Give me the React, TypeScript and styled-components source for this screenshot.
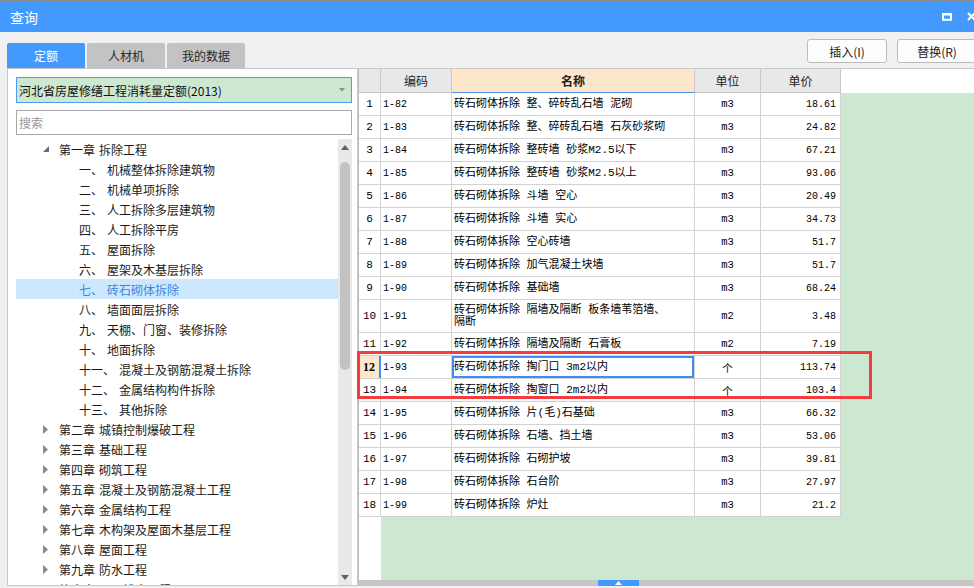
import React from 'react';
import styled, { createGlobalStyle } from 'styled-components';

const GlobalStyle = createGlobalStyle`
  html, body { margin: 0; padding: 0; overflow: hidden; background: #f0f0f0; }
  body { font-family: "Noto Sans CJK SC", "Noto Sans", sans-serif; }
  #root { width: 974px; height: 588px; overflow: hidden; }
  * { box-sizing: border-box; }
`;

const Win = styled.div`
  width: 980px;
  height: 588px;
  display: flex;
  flex-direction: column;
  background: #f0f0f0;
`;

const TitleBar = styled.div`
  height: 32px;
  border-top: 1px solid #8e8e8e;
  background: #4499ff;
  display: flex;
  align-items: center;
  padding: 0 4px 0 10px;
  color: #fff;
  font-size: 14px;
`;

const Title = styled.span`
  flex: 1;
  line-height: 1;
`;

const WinControls = styled.div`
  display: flex;
  align-items: center;
  gap: 15px;
`;

const Toolbar = styled.div`
  height: 36px;
  display: flex;
  align-items: flex-end;
  padding: 0 3px 0 7px;
`;

const Tabs = styled.div`
  display: flex;
  gap: 2px;
  flex: 1;
`;

const Tab = styled.div<{ $active?: boolean }>`
  width: 78px;
  height: 25px;
  display: flex;
  align-items: center;
  justify-content: center;
  font-size: 12px;
  border-radius: 2px 2px 0 0;
  background: ${(p) => (p.$active ? '#4499ff' : '#c3c3c3')};
  color: ${(p) => (p.$active ? '#fff' : '#2a2a2a')};
`;

const Buttons = styled.div`
  align-self: flex-start;
  margin-top: 7px;
  display: flex;
  gap: 10px;
`;

const Button = styled.div`
  width: 80px;
  height: 24px;
  border: 1px solid #bcbcbc;
  border-radius: 3px;
  background: #fdfdfd;
  display: flex;
  align-items: center;
  justify-content: center;
  font-size: 12px;
  color: #222;
`;

const Content = styled.div`
  height: 518px;
  display: flex;
  padding-left: 7px;
`;

const LeftPanel = styled.div`
  width: 351px;
  height: 518px;
  background: #fff;
  border: 1px solid #c9c9c9;
  padding: 8px 5px 0 8px;
  display: flex;
  flex-direction: column;
`;

const Select = styled.div`
  height: 26px;
  border: 1px solid #4f9bf0;
  background: #cde8d0;
  display: flex;
  align-items: center;
  padding: 0 6px 0 2px;
  font-size: 12px;
  color: #111;
`;

const SelectText = styled.span`
  flex: 1;
`;

const Search = styled.input`
  margin-top: 7px;
  height: 25px;
  border: 1px solid #a9a9a9;
  outline: none;
  padding: 0 2px;
  font-family: "Noto Sans CJK SC", sans-serif;
  font-size: 12px;
  color: #222;
  &::placeholder { color: #9a9a9a; }
`;

const TreeArea = styled.div`
  margin-top: 4px;
  flex: 1;
  display: flex;
  min-height: 0;
`;

const TreeList = styled.div`
  flex: 1;
  overflow: hidden;
`;

const TreeRow = styled.div<{ $indent: number; $selected?: boolean }>`
  height: 20px;
  display: flex;
  align-items: center;
  padding-left: ${(p) => p.$indent}px;
  font-size: 12px;
  white-space: nowrap;
  background: ${(p) => (p.$selected ? '#cce8ff' : 'transparent')};
  color: ${(p) => (p.$selected ? '#3a86e0' : '#1a1a1a')};
`;

const Toggle = styled.span`
  width: 16px;
  display: flex;
  align-items: center;
`;

const Prefix = styled.span`
  margin-right: 4px;
`;

const VScroll = styled.div`
  width: 14px;
  background: #e9e9e9;
  display: flex;
  flex-direction: column;
  align-items: center;
`;

const ScrollArrow = styled.div`
  height: 16px;
  display: flex;
  align-items: center;
  justify-content: center;
`;

const Thumb = styled.div`
  margin-top: 7px;
  width: 10px;
  height: 208px;
  border-radius: 5px;
  background: #c2c2c2;
`;

const Spacer = styled.div`
  flex: 1;
`;

const RightPanel = styled.div`
  flex: 1;
  height: 518px;
  display: flex;
  flex-direction: column;
  border-top: 1px solid #c9c9c9;
  border-left: 1px solid #bdbdbd;
  background: #fff;
`;

const HeaderRow = styled.div`
  height: 24px;
  display: flex;
  background: #fff;
`;

const HeadCell = styled.div<{ $w: number; $active?: boolean }>`
  width: ${(p) => p.$w}px;
  height: 24px;
  display: flex;
  align-items: center;
  justify-content: center;
  font-size: 12px;
  color: #222;
  background: ${(p) => (p.$active ? '#fde6c9' : '#e8e8e8')};
  font-weight: ${(p) => (p.$active ? 700 : 400)};
  border-right: 1px solid #c9c9c9;
  border-bottom: 1px solid ${(p) => (p.$active ? '#4a90e2' : '#c9c9c9')};
`;

const Body = styled.div`
  position: relative;
  flex: 1;
  background: linear-gradient(to right, #fff 22px, #cde8d0 22px);
`;

const Row = styled.div<{ $h: number }>`
  width: 482px;
  height: ${(p) => p.$h}px;
  display: flex;
  background: #fff;
  border-bottom: 1px solid #d2d2d2;
`;

const Cell = styled.div<{ $w: number; $align?: 'left' | 'center' | 'right' }>`
  width: ${(p) => p.$w}px;
  height: 100%;
  display: flex;
  align-items: center;
  justify-content: ${(p) => (p.$align === 'center' ? 'center' : p.$align === 'right' ? 'flex-end' : 'flex-start')};
  padding: 0 ${(p) => (p.$align === 'right' ? 4 : 0)}px 0 ${(p) => (p.$align === 'left' ? 2 : 0)}px;
  border-right: 1px solid #d2d2d2;
  font-family: "Liberation Mono", "Noto Sans CJK SC", monospace;
  font-size: 10px;
  color: #000;
  white-space: nowrap;
`;

const NumCell = styled(Cell)<{ $sel?: boolean }>`
  font-size: ${(p) => (p.$sel ? 12 : 11)}px;
  font-weight: ${(p) => (p.$sel ? 700 : 400)};
  background: ${(p) => (p.$sel ? '#fde6c9' : '#fff')};
  border-right: ${(p) => (p.$sel ? '2px solid #3d8ef0' : '1px solid #d2d2d2')};
  font-family: ${(p) => (p.$sel ? '"Liberation Serif", serif' : '"Liberation Mono", monospace')};
`;

const NameCell = styled(Cell)<{ $sel?: boolean }>`
  font-size: 11px;
  line-height: 12px;
  white-space: pre-line;
  box-shadow: ${(p) => (p.$sel ? 'inset 0 0 0 2px #3d8ef0' : 'none')};
`;

const UnitCell = styled(Cell)`
  font-size: 10.5px;
`;

const RedBox = styled.div`
  position: absolute;
  left: -2px;
  top: 258px;
  width: 515px;
  height: 48px;
  border: 3px solid #f43c3c;
  pointer-events: none;
`;

const SplitBar = styled.div`
  height: 6px;
  background: #c6c6c6;
  display: flex;
`;

const Handle = styled.div`
  margin-left: 239px;
  width: 41px;
  height: 6px;
  background: #4499ff;
  display: flex;
  align-items: center;
  justify-content: center;
`;

type TreeItem =
  | { kind: 'chapter'; no: string; label: string; open?: boolean }
  | { kind: 'section'; no: string; label: string; selected?: boolean };

const tree: TreeItem[] = [
  { kind: 'chapter', no: '第一章', label: '拆除工程', open: true },
  { kind: 'section', no: '一、', label: '机械整体拆除建筑物' },
  { kind: 'section', no: '二、', label: '机械单项拆除' },
  { kind: 'section', no: '三、', label: '人工拆除多层建筑物' },
  { kind: 'section', no: '四、', label: '人工拆除平房' },
  { kind: 'section', no: '五、', label: '屋面拆除' },
  { kind: 'section', no: '六、', label: '屋架及木基层拆除' },
  { kind: 'section', no: '七、', label: '砖石砌体拆除', selected: true },
  { kind: 'section', no: '八、', label: '墙面面层拆除' },
  { kind: 'section', no: '九、', label: '天棚、门窗、装修拆除' },
  { kind: 'section', no: '十、', label: '地面拆除' },
  { kind: 'section', no: '十一、', label: '混凝土及钢筋混凝土拆除' },
  { kind: 'section', no: '十二、', label: '金属结构构件拆除' },
  { kind: 'section', no: '十三、', label: '其他拆除' },
  { kind: 'chapter', no: '第二章', label: '城镇控制爆破工程' },
  { kind: 'chapter', no: '第三章', label: '基础工程' },
  { kind: 'chapter', no: '第四章', label: '砌筑工程' },
  { kind: 'chapter', no: '第五章', label: '混凝土及钢筋混凝土工程' },
  { kind: 'chapter', no: '第六章', label: '金属结构工程' },
  { kind: 'chapter', no: '第七章', label: '木构架及屋面木基层工程' },
  { kind: 'chapter', no: '第八章', label: '屋面工程' },
  { kind: 'chapter', no: '第九章', label: '防水工程' },
  { kind: 'chapter', no: '第十章', label: '屋面排水工程' },
];

type Rec = { code: string; name: string; unit: string; price: string; tall?: boolean; sel?: boolean };

const rows: Rec[] = [
  { code: '1-82', name: '砖石砌体拆除 整、碎砖乱石墙 泥砌', unit: 'm3', price: '18.61' },
  { code: '1-83', name: '砖石砌体拆除 整、碎砖乱石墙 石灰砂浆砌', unit: 'm3', price: '24.82' },
  { code: '1-84', name: '砖石砌体拆除 整砖墙 砂浆M2.5以下', unit: 'm3', price: '67.21' },
  { code: '1-85', name: '砖石砌体拆除 整砖墙 砂浆M2.5以上', unit: 'm3', price: '93.06' },
  { code: '1-86', name: '砖石砌体拆除 斗墙 空心', unit: 'm3', price: '20.49' },
  { code: '1-87', name: '砖石砌体拆除 斗墙 实心', unit: 'm3', price: '34.73' },
  { code: '1-88', name: '砖石砌体拆除 空心砖墙', unit: 'm3', price: '51.7' },
  { code: '1-89', name: '砖石砌体拆除 加气混凝土块墙', unit: 'm3', price: '51.7' },
  { code: '1-90', name: '砖石砌体拆除 基础墙', unit: 'm3', price: '68.24' },
  { code: '1-91', name: '砖石砌体拆除 隔墙及隔断 板条墙苇箔墙、\n隔断', unit: 'm2', price: '3.48', tall: true },
  { code: '1-92', name: '砖石砌体拆除 隔墙及隔断 石膏板', unit: 'm2', price: '7.19' },
  { code: '1-93', name: '砖石砌体拆除 掏门口 3m2以内', unit: '个', price: '113.74', sel: true },
  { code: '1-94', name: '砖石砌体拆除 掏窗口 2m2以内', unit: '个', price: '103.4' },
  { code: '1-95', name: '砖石砌体拆除 片(毛)石基础', unit: 'm3', price: '66.32' },
  { code: '1-96', name: '砖石砌体拆除 石墙、挡土墙', unit: 'm3', price: '53.06' },
  { code: '1-97', name: '砖石砌体拆除 石砌护坡', unit: 'm3', price: '39.81' },
  { code: '1-98', name: '砖石砌体拆除 石台阶', unit: 'm3', price: '27.97' },
  { code: '1-99', name: '砖石砌体拆除 炉灶', unit: 'm3', price: '21.2' },
];

const W = { num: 22, code: 71, name: 243, unit: 66, price: 80 };

function TreeView() {
  return (
    <TreeList>
      {tree.map((t, i) =>
        t.kind === 'chapter' ? (
          <TreeRow key={i} $indent={27}>
            <Toggle>
              {t.open ? (
                <svg width="7" height="7" viewBox="0 0 7 7">
                  <polygon points="6,0 6,6 0,6" fill="#6e6e6e" />
                </svg>
              ) : (
                <svg width="5" height="9" viewBox="0 0 5 9">
                  <polygon points="0,0 5,4.5 0,9" fill="#8a8a8a" />
                </svg>
              )}
            </Toggle>
            <Prefix>{t.no}</Prefix>
            <span>{t.label}</span>
          </TreeRow>
        ) : (
          <TreeRow key={i} $indent={63} $selected={t.selected}>
            <Prefix>{t.no}</Prefix>
            <span>{t.label}</span>
          </TreeRow>
        )
      )}
    </TreeList>
  );
}

export default function App() {
  return (
    <>
      <GlobalStyle />
      <Win>
        <TitleBar>
          <Title>查询</Title>
          <WinControls>
            <svg width="10" height="8" viewBox="0 0 10 8">
              <rect x="1" y="1.2" width="8" height="5.6" fill="none" stroke="#fff" strokeWidth="2" />
              <rect x="0" y="0" width="10" height="2.4" fill="#fff" />
            </svg>
            <svg width="9" height="9" viewBox="0 0 9 9">
              <path d="M1 1L8 8M8 1L1 8" stroke="#fff" strokeWidth="2" />
            </svg>
          </WinControls>
        </TitleBar>
        <Toolbar>
          <Tabs>
            <Tab $active>定额</Tab>
            <Tab>人材机</Tab>
            <Tab>我的数据</Tab>
          </Tabs>
          <Buttons>
            <Button>插入(I)</Button>
            <Button>替换(R)</Button>
          </Buttons>
        </Toolbar>
        <Content>
          <LeftPanel>
            <Select>
              <SelectText>河北省房屋修缮工程消耗量定额(2013)</SelectText>
              <svg width="6" height="4" viewBox="0 0 6 4">
                <polygon points="0,0 6,0 3,3.5" fill="#8c8c8c" />
              </svg>
            </Select>
            <Search placeholder="搜索" />
            <TreeArea>
              <TreeView />
              <VScroll>
                <ScrollArrow>
                  <svg width="8" height="5" viewBox="0 0 8 5">
                    <polygon points="0,5 8,5 4,0" fill="#606060" />
                  </svg>
                </ScrollArrow>
                <Thumb />
                <Spacer />
                <ScrollArrow>
                  <svg width="8" height="5" viewBox="0 0 8 5">
                    <polygon points="0,0 8,0 4,5" fill="#606060" />
                  </svg>
                </ScrollArrow>
              </VScroll>
            </TreeArea>
          </LeftPanel>
          <RightPanel>
            <HeaderRow>
              <HeadCell $w={W.num} />
              <HeadCell $w={W.code}>编码</HeadCell>
              <HeadCell $w={W.name} $active>名称</HeadCell>
              <HeadCell $w={W.unit}>单位</HeadCell>
              <HeadCell $w={W.price}>单价</HeadCell>
            </HeaderRow>
            <Body>
              {rows.map((r, i) => (
                <Row key={r.code} $h={r.tall ? 33 : 23}>
                  <NumCell $w={W.num} $align="center" $sel={r.sel}>{i + 1}</NumCell>
                  <Cell $w={W.code} $align="left">{r.code}</Cell>
                  <NameCell $w={W.name} $align="left" $sel={r.sel}>{r.name}</NameCell>
                  <UnitCell $w={W.unit} $align="center">{r.unit}</UnitCell>
                  <Cell $w={W.price} $align="right">{r.price}</Cell>
                </Row>
              ))}
              <RedBox />
            </Body>
            <SplitBar>
              <Handle>
                <svg width="7" height="4" viewBox="0 0 7 4">
                  <polygon points="0,4 7,4 3.5,0" fill="#fff" />
                </svg>
              </Handle>
            </SplitBar>
          </RightPanel>
        </Content>
      </Win>
    </>
  );
}
